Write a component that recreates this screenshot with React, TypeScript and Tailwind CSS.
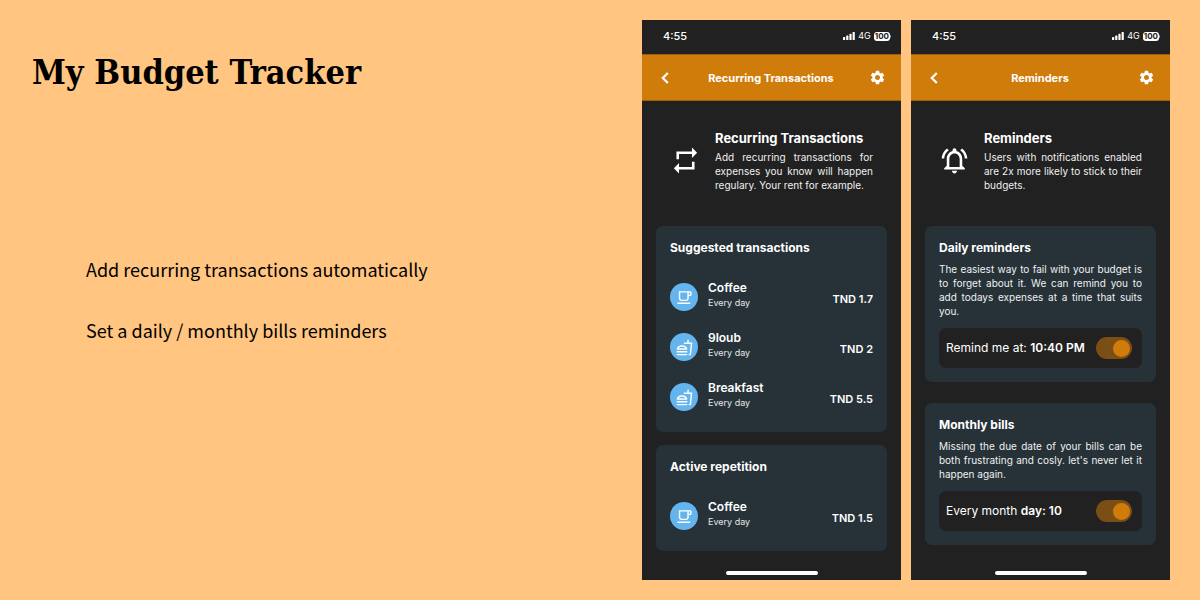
import type { ReactNode } from "react";
import {
  MdOutlineFastfood,
  MdOutlineLocalCafe,
  MdOutlineNotificationsActive,
  MdRepeat,
  MdSettings,
} from "react-icons/md";

type Transaction = {
  name: string;
  frequency: string;
  amount: string;
  icon: ReactNode;
};

const cafe = <MdOutlineLocalCafe className="size-[17px]" />;
const food = <MdOutlineFastfood className="size-[17px]" />;

const suggested: Transaction[] = [
  { name: "Coffee", frequency: "Every day", amount: "TND 1.7", icon: cafe },
  { name: "9loub", frequency: "Every day", amount: "TND 2", icon: food },
  { name: "Breakfast", frequency: "Every day", amount: "TND 5.5", icon: food },
];

const active: Transaction[] = [
  { name: "Coffee", frequency: "Every day", amount: "TND 1.5", icon: cafe },
];

function StatusBar() {
  return (
    <div className="flex h-[34px] items-center justify-between pr-[10px] pb-[2px] pl-[21px]">
      <span className="text-[11px] leading-4 font-medium">4:55</span>
      <div className="flex items-center gap-[3px]">
        <svg viewBox="0 0 12 8" className="h-2 w-3" fill="currentColor" aria-hidden="true">
          <rect x="0" y="5" width="2.2" height="3" rx="0.6" />
          <rect x="3.2" y="3.6" width="2.2" height="4.4" rx="0.6" />
          <rect x="6.4" y="1.8" width="2.2" height="6.2" rx="0.6" />
          <rect x="9.6" y="0" width="2.2" height="8" rx="0.6" />
        </svg>
        <span className="text-[9px] leading-4">4G</span>
        <div className="flex items-center">
          <span className="rounded-[3px] bg-white px-px text-[8px] leading-[9px] font-bold text-[#212121]">
            100
          </span>
          <span className="h-[3px] w-px rounded-r-full bg-white/60" />
        </div>
      </div>
    </div>
  );
}

function AppBar({ title }: { title: string }) {
  return (
    <header className="flex h-[47px] items-center justify-between border-y border-[#9a5f12] bg-[#d07c0b] px-[15px]">
      <button type="button" aria-label="Back" className="flex size-4 items-center justify-center">
        <svg viewBox="0 0 8 12" className="h-3 w-2" fill="none" stroke="currentColor" strokeWidth="2.2" aria-hidden="true">
          <path d="M6.8 1 1.8 6l5 5" />
        </svg>
      </button>
      <h2 className="text-[11px] leading-4 font-bold">{title}</h2>
      <button type="button" aria-label="Settings">
        <MdSettings className="size-[17px]" />
      </button>
    </header>
  );
}

function Intro({ icon, title, children }: { icon: ReactNode; title: string; children: ReactNode }) {
  return (
    <div className="flex items-center gap-[14px] px-7 pt-7 pb-[34px]">
      <div className="flex w-[31px] shrink-0 justify-center">{icon}</div>
      <div className="min-w-0 flex-1">
        <h3 className="mb-[3px] text-[13px] leading-[18px] font-bold">{title}</h3>
        <p className="text-justify text-[10px] leading-[14px] text-[#f0f0f0]">{children}</p>
      </div>
    </div>
  );
}

function Card({ title, children }: { title: string; children: ReactNode }) {
  return (
    <section className="rounded-[7px] bg-[#263238] p-[14px]">
      <h4 className="text-[12px] leading-4 font-bold">{title}</h4>
      {children}
    </section>
  );
}

function TransactionList({ items }: { items: Transaction[] }) {
  return (
    <ul className="mt-4 mb-[-4px]">
      {items.map((item) => (
        <li key={item.name} className="flex h-[50px] items-center">
          <span className="flex size-7 items-center justify-center rounded-full bg-[#64b5ee]">
            {item.icon}
          </span>
          <div className="ml-[10px] flex-1 pb-1">
            <p className="text-[12px] leading-4 font-semibold">{item.name}</p>
            <p className="text-[9px] leading-[14px] text-[#e4e7e9]">{item.frequency}</p>
          </div>
          <span className="pt-1 text-[11px] leading-4 font-semibold">{item.amount}</span>
        </li>
      ))}
    </ul>
  );
}

function Reminder({ text, id, children }: { text: string; id: string; children: ReactNode }) {
  return (
    <>
      <p className="mt-[6px] text-justify text-[10px] leading-[14px] text-[#f0f0f0]">{text}</p>
      <div className="mt-[10px] flex h-10 items-center justify-between rounded-[7px] bg-[#212121] pr-[10px] pl-[7px]">
        <label htmlFor={id} className="text-[12px] leading-4">
          {children}
        </label>
        <input
          id={id}
          type="checkbox"
          defaultChecked
          className="flex h-[22px] w-9 appearance-none items-center rounded-full bg-[#7b4e16] px-[2px] before:size-[17px] before:rounded-full before:bg-[#d07c0b] checked:justify-end"
        />
      </div>
    </>
  );
}

function Phone({ title, children }: { title: string; children: ReactNode }) {
  return (
    <article className="flex min-h-[560px] min-w-0 flex-1 flex-col bg-[#212121] font-['Inter',sans-serif] text-white">
      <StatusBar />
      <AppBar title={title} />
      {children}
      <div className="mx-auto mt-auto mb-[5px] h-1 w-[92px] rounded-full bg-white" />
    </article>
  );
}

export default function App() {
  return (
    <main className="flex min-h-screen items-start bg-[#ffc581] pt-5 pr-[30px] pb-5 text-black">
      <div className="flex-1 pt-6 pl-8">
        <h1 className="font-['DejaVu_Serif_Condensed','DejaVu_Serif',serif] text-[34px] leading-[56px] font-bold">
          My Budget Tracker
        </h1>
        <ul className="mt-[155px] space-y-[33px] pl-[54px] font-['Noto_Sans_CJK_SC',sans-serif] text-[18px] leading-7">
          <li>Add recurring transactions automatically</li>
          <li>Set a daily / monthly bills reminders</li>
        </ul>
      </div>
      <div className="flex w-[528px] gap-[10px]">
        <Phone title="Recurring Transactions">
          <Intro icon={<MdRepeat className="size-[31px]" />} title="Recurring Transactions">
            Add recurring transactions for expenses you know will happen regulary. Your rent for
            example.
          </Intro>
          <div className="space-y-[13px] px-[14px]">
            <Card title="Suggested transactions">
              <TransactionList items={suggested} />
            </Card>
            <Card title="Active repetition">
              <TransactionList items={active} />
            </Card>
          </div>
        </Phone>
        <Phone title="Reminders">
          <Intro icon={<MdOutlineNotificationsActive className="size-[31px]" />} title="Reminders">
            Users with notifications enabled are 2x more likely to stick to their budgets.
          </Intro>
          <div className="space-y-[21px] px-[14px]">
            <Card title="Daily reminders">
              <Reminder
                id="daily"
                text="The easiest way to fail with your budget is to forget about it. We can remind you to add todays expenses at a time that suits you."
              >
                Remind me at: <strong className="font-semibold">10:40 PM</strong>
              </Reminder>
            </Card>
            <Card title="Monthly bills">
              <Reminder
                id="monthly"
                text="Missing the due date of your bills can be both frustrating and cosly. let's never let it happen again."
              >
                Every month <strong className="font-semibold">day: 10</strong>
              </Reminder>
            </Card>
          </div>
        </Phone>
      </div>
    </main>
  );
}
